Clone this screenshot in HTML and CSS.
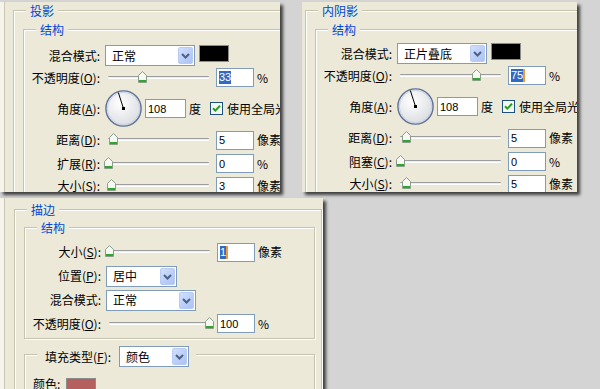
FILE: index.html
```html
<!DOCTYPE html>
<html lang="zh-CN">
<head>
<meta charset="utf-8">
<title>图层样式</title>
<link rel="stylesheet" href="styles.css">
</head>
<body>
<main class="desk">

  <section class="dlg dlg1">
    <div class="grp outer">
      <div class="lg">投影</div>
      <div class="grp inner">
        <div class="lg">结构</div>
        <div class="rows">
          <div class="row h21">
            <span class="lbl">混合模式:</span>
            <div class="sel w90"><span class="val">正常</span><span class="btn"><svg width="13" height="15" viewBox="0 0 13 15"><path d="M3 6 L6.5 9.5 L10 6" fill="none" stroke="#4d6185" stroke-width="2"/></svg></span></div>
            <span class="swatch sw-black"></span>
          </div>
          <div class="row h23">
            <span class="lbl">不透明度(<u>O</u>):</span>
            <div class="slider"><span class="track"></span><span class="thumb" style="left:34px"><svg width="9" height="12" viewBox="0 0 9 12"><path d="M4.5 0.5 L8.5 4.5 V11.5 H0.5 V4.5 Z" fill="#f7f7f3" stroke="#8a9f8a"/><rect x="1" y="9" width="7" height="2" fill="#2fa52f"/></svg></span></div>
            <span class="num"><span class="hl">33</span></span>
            <span class="unit">%</span>
          </div>
          <div class="row h39">
            <span class="lbl">角度(<u>A</u>):</span>
            <svg class="dial" width="37" height="37" viewBox="0 0 37 37"><defs><radialGradient id="dg1" cx="40%" cy="35%" r="70%"><stop offset="0" stop-color="#ffffff"/><stop offset="1" stop-color="#d9dbe0"/></radialGradient></defs><circle cx="18.5" cy="18.5" r="17.6" fill="url(#dg1)" stroke="#5d7096" stroke-width="1.4"/><circle cx="18.5" cy="18.5" r="16.2" fill="none" stroke="#c8d1e2" stroke-width="1"/><line x1="18.5" y1="18.5" x2="13.3" y2="2.4" stroke="#000" stroke-width="1"/><rect x="17" y="17" width="3" height="3" fill="#000"/></svg>
            <span class="num w41">108</span>
            <span class="deg">度</span>
            <svg class="chk" width="13" height="13" viewBox="0 0 13 13"><rect x="0.5" y="0.5" width="12" height="12" fill="#f6f6f2" stroke="#1c5180"/><path d="M3 6.2 L5.3 8.6 L10 3.8" fill="none" stroke="#21a121" stroke-width="2"/></svg>
            <span class="chklbl">使用全局光</span>
          </div>
          <div class="row h24">
            <span class="lbl">距离(<u>D</u>):</span>
            <div class="slider"><span class="track"></span><span class="thumb" style="left:5px"><svg width="9" height="12" viewBox="0 0 9 12"><path d="M4.5 0.5 L8.5 4.5 V11.5 H0.5 V4.5 Z" fill="#f7f7f3" stroke="#8a9f8a"/><rect x="1" y="9" width="7" height="2" fill="#2fa52f"/></svg></span></div>
            <span class="num">5</span>
            <span class="unit">像素</span>
          </div>
          <div class="row h23">
            <span class="lbl">扩展(<u>R</u>):</span>
            <div class="slider"><span class="track"></span><span class="thumb" style="left:0px"><svg width="9" height="12" viewBox="0 0 9 12"><path d="M4.5 0.5 L8.5 4.5 V11.5 H0.5 V4.5 Z" fill="#f7f7f3" stroke="#8a9f8a"/><rect x="1" y="9" width="7" height="2" fill="#2fa52f"/></svg></span></div>
            <span class="num">0</span>
            <span class="unit">%</span>
          </div>
          <div class="row h22">
            <span class="lbl">大小(<u>S</u>):</span>
            <div class="slider"><span class="track"></span><span class="thumb" style="left:3px"><svg width="9" height="12" viewBox="0 0 9 12"><path d="M4.5 0.5 L8.5 4.5 V11.5 H0.5 V4.5 Z" fill="#f7f7f3" stroke="#8a9f8a"/><rect x="1" y="9" width="7" height="2" fill="#2fa52f"/></svg></span></div>
            <span class="num">3</span>
            <span class="unit">像素</span>
          </div>
        </div>
      </div>
    </div>
  </section>

  <section class="dlg dlg2">
    <div class="grp outer">
      <div class="lg">内阴影</div>
      <div class="grp inner">
        <div class="lg">结构</div>
        <div class="rows rows2">
          <div class="row h21">
            <span class="lbl">混合模式:</span>
            <div class="sel w90"><span class="val">正片叠底</span><span class="btn"><svg width="13" height="15" viewBox="0 0 13 15"><path d="M3 6 L6.5 9.5 L10 6" fill="none" stroke="#4d6185" stroke-width="2"/></svg></span></div>
            <span class="swatch sw-black"></span>
          </div>
          <div class="row h23">
            <span class="lbl">不透明度(<u>O</u>):</span>
            <div class="slider"><span class="track"></span><span class="thumb" style="left:76px"><svg width="9" height="12" viewBox="0 0 9 12"><path d="M4.5 0.5 L8.5 4.5 V11.5 H0.5 V4.5 Z" fill="#f7f7f3" stroke="#8a9f8a"/><rect x="1" y="9" width="7" height="2" fill="#2fa52f"/></svg></span></div>
            <span class="num"><span class="hl caret">75</span></span>
            <span class="unit">%</span>
          </div>
          <div class="row h39">
            <span class="lbl">角度(<u>A</u>):</span>
            <svg class="dial" width="37" height="37" viewBox="0 0 37 37"><defs><radialGradient id="dg2" cx="40%" cy="35%" r="70%"><stop offset="0" stop-color="#ffffff"/><stop offset="1" stop-color="#d9dbe0"/></radialGradient></defs><circle cx="18.5" cy="18.5" r="17.6" fill="url(#dg2)" stroke="#5d7096" stroke-width="1.4"/><circle cx="18.5" cy="18.5" r="16.2" fill="none" stroke="#c8d1e2" stroke-width="1"/><line x1="18.5" y1="18.5" x2="13.3" y2="2.4" stroke="#000" stroke-width="1"/><rect x="17" y="17" width="3" height="3" fill="#000"/></svg>
            <span class="num w41">108</span>
            <span class="deg">度</span>
            <svg class="chk" width="13" height="13" viewBox="0 0 13 13"><rect x="0.5" y="0.5" width="12" height="12" fill="#f6f6f2" stroke="#1c5180"/><path d="M3 6.2 L5.3 8.6 L10 3.8" fill="none" stroke="#21a121" stroke-width="2"/></svg>
            <span class="chklbl">使用全局光</span>
          </div>
          <div class="row h24">
            <span class="lbl">距离(<u>D</u>):</span>
            <div class="slider"><span class="track"></span><span class="thumb" style="left:6px"><svg width="9" height="12" viewBox="0 0 9 12"><path d="M4.5 0.5 L8.5 4.5 V11.5 H0.5 V4.5 Z" fill="#f7f7f3" stroke="#8a9f8a"/><rect x="1" y="9" width="7" height="2" fill="#2fa52f"/></svg></span></div>
            <span class="num">5</span>
            <span class="unit">像素</span>
          </div>
          <div class="row h23">
            <span class="lbl">阻塞(<u>C</u>):</span>
            <div class="slider"><span class="track"></span><span class="thumb" style="left:0px"><svg width="9" height="12" viewBox="0 0 9 12"><path d="M4.5 0.5 L8.5 4.5 V11.5 H0.5 V4.5 Z" fill="#f7f7f3" stroke="#8a9f8a"/><rect x="1" y="9" width="7" height="2" fill="#2fa52f"/></svg></span></div>
            <span class="num">0</span>
            <span class="unit">%</span>
          </div>
          <div class="row h22">
            <span class="lbl">大小(<u>S</u>):</span>
            <div class="slider"><span class="track"></span><span class="thumb" style="left:6px"><svg width="9" height="12" viewBox="0 0 9 12"><path d="M4.5 0.5 L8.5 4.5 V11.5 H0.5 V4.5 Z" fill="#f7f7f3" stroke="#8a9f8a"/><rect x="1" y="9" width="7" height="2" fill="#2fa52f"/></svg></span></div>
            <span class="num">5</span>
            <span class="unit">像素</span>
          </div>
        </div>
      </div>
    </div>
  </section>

  <section class="dlg dlg3">
    <div class="grp outer">
      <div class="lg">描边</div>
      <div class="grp inner">
        <div class="lg">结构</div>
        <div class="rows rows3">
          <div class="row h24">
            <span class="lbl">大小(<u>S</u>):</span>
            <div class="slider"><span class="track"></span><span class="thumb" style="left:0px"><svg width="9" height="12" viewBox="0 0 9 12"><path d="M4.5 0.5 L8.5 4.5 V11.5 H0.5 V4.5 Z" fill="#f7f7f3" stroke="#8a9f8a"/><rect x="1" y="9" width="7" height="2" fill="#2fa52f"/></svg></span></div>
            <span class="num"><span class="hl caret">1</span></span>
            <span class="unit">像素</span>
          </div>
          <div class="row h24">
            <span class="lbl">位置(<u>P</u>):</span>
            <div class="sel w71"><span class="val">居中</span><span class="btn"><svg width="13" height="15" viewBox="0 0 13 15"><path d="M3 6 L6.5 9.5 L10 6" fill="none" stroke="#4d6185" stroke-width="2"/></svg></span></div>
          </div>
          <div class="row h24">
            <span class="lbl">混合模式:</span>
            <div class="sel w90"><span class="val">正常</span><span class="btn"><svg width="13" height="15" viewBox="0 0 13 15"><path d="M3 6 L6.5 9.5 L10 6" fill="none" stroke="#4d6185" stroke-width="2"/></svg></span></div>
          </div>
          <div class="row h23">
            <span class="lbl">不透明度(<u>O</u>):</span>
            <div class="slider"><span class="track"></span><span class="thumb" style="left:100px"><svg width="9" height="12" viewBox="0 0 9 12"><path d="M4.5 0.5 L8.5 4.5 V11.5 H0.5 V4.5 Z" fill="#f7f7f3" stroke="#8a9f8a"/><rect x="1" y="9" width="7" height="2" fill="#2fa52f"/></svg></span></div>
            <span class="num">100</span>
            <span class="unit">%</span>
          </div>
        </div>
      </div>
      <div class="grp inner fill">
        <div class="lg2">
          <span class="lbl2">填充类型(<u>F</u>):</span>
          <div class="sel w70"><span class="val">颜色</span><span class="btn"><svg width="13" height="15" viewBox="0 0 13 15"><path d="M3 6 L6.5 9.5 L10 6" fill="none" stroke="#4d6185" stroke-width="2"/></svg></span></div>
        </div>
        <div class="crow">
          <span class="clbl">颜色:</span>
          <span class="swatch sw-red"></span>
        </div>
      </div>
    </div>
  </section>

</main>
</body>
</html>
```

FILE: styles.css
```css
* { box-sizing: border-box; margin: 0; padding: 0; }

html, body { width: 600px; height: 389px; overflow: hidden; }

body {
  background: #d4d4d4;
  font-family: "Noto Sans CJK SC", "Noto Sans", sans-serif;
  font-size: 12px;
  line-height: 14px;
  color: #000;
}

.desk { position: relative; width: 600px; height: 389px; }

.dlg {
  position: absolute;
  overflow: hidden;
  background: #ece9d8;
  box-shadow: 3px 3px 3px rgba(0, 0, 0, 0.7);
}

.dlg1 {
  left: 0; top: 2px; width: 280px; height: 190px;
  box-shadow: inset 4px 0 0 #f5f3ea, inset 5px 0 0 #cac7b6, 3px 3px 3px rgba(0, 0, 0, 0.7);
}
.dlg2 { left: 302px; top: 2px; width: 275px; height: 190px; }
.dlg3 {
  left: 0; top: 198px; width: 323px; height: 200px;
  box-shadow: inset 4px 0 0 #f5f3ea, inset 5px 0 0 #cac7b6, 3px 3px 3px rgba(0, 0, 0, 0.7);
}

/* group boxes */
.grp {
  border: 1px solid #c6c3b1;
  box-shadow: inset 1px 1px 0 #fff, 1px 1px 0 #fff;
}

.lg {
  margin: -7px 0 0 12px;
  padding: 0 4px;
  width: max-content;
  height: 14px;
  line-height: 14px;
  background: #ece9d8;
  color: #0046d5;
}

.outer { margin: 8px 0 0 13px; width: 420px; min-height: 300px; }
.inner { margin: 11px 0 0 9px; width: 400px; min-height: 260px; }

.dlg2 .outer { margin-left: 3px; }

.dlg3 .outer { margin: 11px 0 0 14px; width: 308px; min-height: 200px; }
.dlg3 .inner { margin: 10px 0 0 9px; width: 291px; min-height: 0; padding-bottom: 3px; }
.dlg3 .fill { margin-top: 15px; min-height: 80px; padding-bottom: 0; }

/* rows */
.rows { margin-top: 8px; display: flex; flex-direction: column; }
.rows2 { margin-top: 6px; }
.rows3 { margin-top: 5px; }

.row { display: flex; align-items: center; flex: none; }
.h21 { height: 21px; }
.h22 { height: 22px; }
.h23 { height: 23px; }
.h24 { height: 24px; }
.h39 { height: 39px; }

.lbl { width: 76px; flex: none; text-align: right; white-space: nowrap; }

u { text-decoration: underline; text-underline-offset: 1px; }

/* combo box */
.sel {
  margin-left: 5px;
  height: 21px;
  flex: none;
  display: flex;
  align-items: center;
  border: 1px solid #7f9db9;
  background: #fff;
}
.w90 { width: 90px; }
.w71 { width: 71px; }
.w70 { width: 70px; }
.val { flex: 1; padding-left: 6px; white-space: nowrap; }
.btn {
  flex: none;
  width: 15px;
  height: 17px;
  margin: 1px;
  display: flex;
  border: 1px solid #b7cbf5;
  border-radius: 2px;
  background: linear-gradient(135deg, #d2e0fd 0%, #b9cdf8 60%, #adc3f4 100%);
}
.btn svg { display: block; }

/* colour swatch */
.swatch { flex: none; display: block; border: 1px solid #8c8c8c; }
.sw-black { margin-left: 4px; width: 30px; height: 17px; align-self: flex-start; background: #000; }
.sw-red { width: 30px; height: 20px; background: #b5605f; }

/* slider */
.slider { position: relative; flex: none; margin-left: 4px; width: 110px; height: 14px; }
.track {
  position: absolute;
  left: 4px; top: 5px;
  width: 101px; height: 3px;
  border-top: 1px solid #9c9c9c;
  border-bottom: 1px solid #fff;
  background: #efeee7;
  border-radius: 1px;
}
.thumb { position: absolute; top: 0; width: 9px; height: 12px; }
.thumb svg { display: block; }

/* numeric fields */
.num {
  flex: none;
  margin-left: 2px;
  width: 38px;
  height: 19px;
  display: flex;
  align-items: center;
  padding-left: 2px;
  border: 1px solid #7f9db9;
  background: #fff;
  font-family: "Liberation Sans", Arial, sans-serif;
  font-size: 11px;
}
.w41 { width: 41px; margin-left: 3px; }
.hl { display: block; height: 13px; line-height: 13px; background: #316ac5; color: #fff; }
.caret { border-right: 2px solid #eb9c35; }

.unit { margin-left: 3px; white-space: nowrap; }

.dial { flex: none; margin-left: 5px; display: block; }
.deg { margin-left: 3px; }
.chk { flex: none; margin-left: 9px; display: block; }
.chklbl { margin-left: 4px; white-space: nowrap; }

/* fill type group */
.lg2 {
  display: flex;
  align-items: center;
  margin: -9px 0 0 12px;
  padding: 0 7px 0 8px;
  width: max-content;
  height: 21px;
  background: #ece9d8;
}
.lbl2 { width: 70px; white-space: nowrap; }
.lg2 .sel { margin-left: 4px; }

.crow { display: flex; align-items: flex-start; margin-top: 11px; padding-left: 8px; }
.clbl { width: 33px; margin-top: -1px; }
```
